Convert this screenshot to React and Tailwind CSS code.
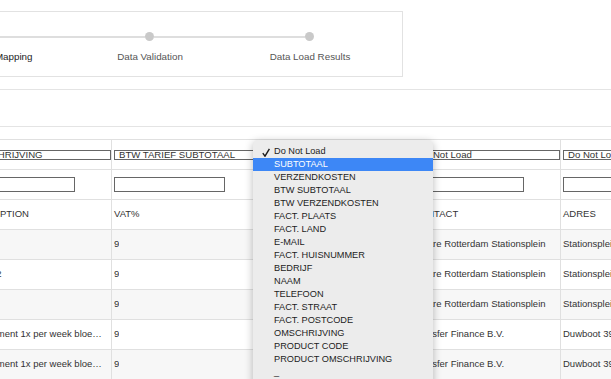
import React from "react";

const menuItems = [
  "Do Not Load",
  "SUBTOTAAL",
  "VERZENDKOSTEN",
  "BTW SUBTOTAAL",
  "BTW VERZENDKOSTEN",
  "FACT. PLAATS",
  "FACT. LAND",
  "E-MAIL",
  "FACT. HUISNUMMER",
  "BEDRIJF",
  "NAAM",
  "TELEFOON",
  "FACT. STRAAT",
  "FACT. POSTCODE",
  "OMSCHRIJVING",
  "PRODUCT CODE",
  "PRODUCT OMSCHRIJVING",
  "_",
];

// column widths line up the grid lines at 111 / 260 / 410 / 560
const columns = [
  { w: "w-[150px]", mapped: "OMSCHRIJVING", name: "DESCRIPTION" },
  { w: "w-[149px]", mapped: "BTW TARIEF SUBTOTAAL", name: "VAT%" },
  { w: "w-[150px]", mapped: "SUBTOTAAL", name: "SUBTOTAL" },
  { w: "w-[150px]", mapped: "Do Not Load", name: "CONTACT" },
  { w: "w-[150px]", mapped: "Do Not Load", name: "ADRES" },
];

const rows = [
  ["", "9", "12,50", "Centre Rotterdam Stationsplein", "Stationsplein 45"],
  ["Boeket 2", "9", "24,95", "Centre Rotterdam Stationsplein", "Stationsplein 45"],
  ["", "9", "12,50", "Centre Rotterdam Stationsplein", "Stationsplein 45"],
  ["Abonnement 1x per week bloemen", "9", "19,95", "Transfer Finance B.V.", "Duwboot 39"],
  ["Abonnement 1x per week bloemen", "9", "19,95", "Transfer Finance B.V.", "Duwboot 39"],
];

function Stepper() {
  return (
    <div className="ml-[-98px] w-[501px] h-[66px] border border-[#e2e2e2] pl-[7px]">
      <div className="flex items-center h-[9px] mt-[20px] pl-[75px]">
        <span className="w-[9px] h-[9px] rounded-full bg-[#c9c9c9]" />
        <span className="w-[151px] h-[2px] bg-[#dedede]" />
        <span className="w-[9px] h-[9px] rounded-full bg-[#c9c9c9]" />
        <span className="w-[151px] h-[2px] bg-[#dedede]" />
        <span className="w-[9px] h-[9px] rounded-full bg-[#c9c9c9]" />
      </div>
      <div className="flex mt-[10px] text-[9.8px] leading-[12px]">
        <span className="w-[160px] text-center text-[#222]">Data Field Mapping</span>
        <span className="w-[160px] text-center text-[#555]">Data Validation</span>
        <span className="w-[160px] text-center text-[#555]">Data Load Results</span>
      </div>
    </div>
  );
}

function Dropdown() {
  return (
    <div className="absolute left-[253px] top-[140px] w-[180px] h-[260px] rounded-[5px] bg-[#ececec] shadow-[0_2px_9px_rgba(0,0,0,0.28)] pt-[5px] text-[9.2px] text-[#1c1c1c]">
      {menuItems.map((item, i) => (
        <div
          key={i}
          className={
            i === 1
              ? "flex items-center h-[13px] bg-[#3d87f6] text-white"
              : "flex items-center h-[13px]"
          }
        >
          <span className="w-[21px] shrink-0 pl-[9px]">
            {i === 0 && (
              <svg width="8" height="9" viewBox="0 0 8 9" className="mt-[1px]">
                <path d="M0.8 5.2 L3 8.2 L7.4 0.8" fill="none" stroke="#1c1c1c" strokeWidth="1.4" />
              </svg>
            )}
          </span>
          <span className="whitespace-nowrap">{item}</span>
        </div>
      ))}
    </div>
  );
}

export default function App() {
  return (
    <div className="relative w-[611px] h-[379px] overflow-hidden bg-white font-['Liberation_Sans',Arial,sans-serif]">
      <div className="h-[90px] border-b border-[#e4e4e4] pt-[11px]">
        <Stepper />
      </div>
      <div className="h-[37px] border-b border-[#e4e4e4]" />

      <div className="mt-[12px] ml-[-38px] w-[749px] border-t border-[#e0e0e0] text-[9.5px] text-[#333]">
        <div className="flex h-[30px] border-b border-[#e0e0e0]">
          {columns.map((c, i) => (
            <div key={i} className={`${c.w} shrink-0 border-r border-[#e0e0e0] pl-[2px] flex items-center`}>
              <div className="flex-1 h-[10px] border border-[#666] pl-[4px] leading-[8px] text-[9.6px] whitespace-nowrap overflow-hidden">
                {c.mapped}
              </div>
            </div>
          ))}
        </div>
        <div className="flex h-[30px] border-b border-[#e0e0e0]">
          {columns.map((c, i) => (
            <div key={i} className={`${c.w} shrink-0 border-r border-[#e0e0e0] pl-[2px] flex items-center`}>
              <div className="w-[111px] h-[15px] border border-[#666] bg-white" />
            </div>
          ))}
        </div>
        <div className="flex h-[30px] border-b border-[#e0e0e0]">
          {columns.map((c, i) => (
            <div key={i} className={`${c.w} shrink-0 border-r border-[#e0e0e0] pl-[2px] pr-[6px] flex items-center`}>
              {c.name}
            </div>
          ))}
        </div>
        {rows.map((r, ri) => (
          <div
            key={ri}
            className={
              ri % 2 === 0
                ? "flex h-[30px] border-b border-[#e0e0e0] bg-[#f7f7f7]"
                : "flex h-[30px] border-b border-[#e0e0e0] bg-white"
            }
          >
            {r.map((cell, ci) => (
              <div
                key={ci}
                className={`${columns[ci].w} shrink-0 border-r border-[#e0e0e0] pl-[2px] pr-[6px] flex items-center min-w-0`}
              >
                <span className="truncate">{cell}</span>
              </div>
            ))}
          </div>
        ))}
      </div>

      <Dropdown />
    </div>
  );
}
